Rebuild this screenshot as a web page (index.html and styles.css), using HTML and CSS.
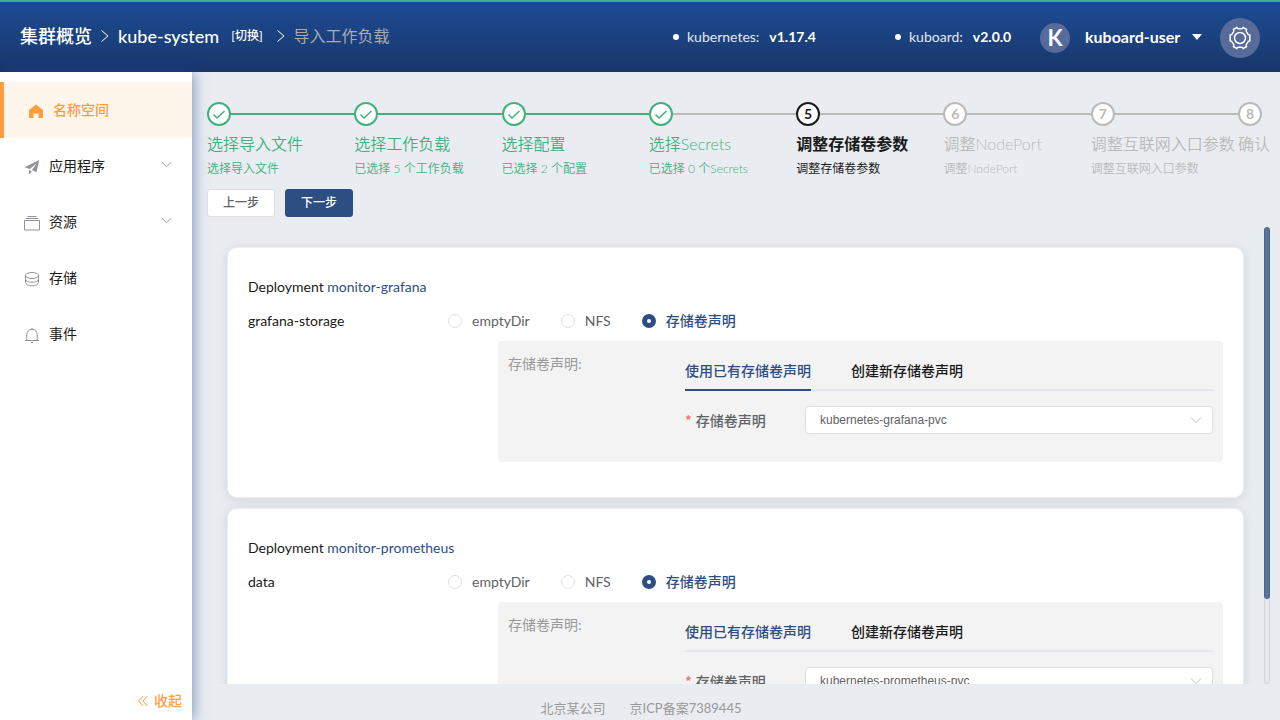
FILE: index.html
```html
<!DOCTYPE html>
<html lang="zh-CN">
<head>
<meta charset="utf-8">
<title>导入工作负载</title>
<link rel="stylesheet" href="styles.css">
</head>
<body>
<svg class="sprite" aria-hidden="true">
  <symbol id="down" viewBox="0 0 12 12"><path d="M1 3.500l5 5 5-5"/></symbol>
  <symbol id="right" viewBox="0 0 10 14"><path d="M1.500 1.500l6.500 5.500-6.500 5.500"/></symbol>
  <symbol id="check" viewBox="0 0 14 14"><path d="M1.500 7.500l3.500 3.500 7.500-7"/></symbol>
</svg>
<header class="header">
  <nav class="crumbs">
    <a class="crumb" href="#">集群概览</a>
    <svg class="crumb-arrow"><use href="#right"/></svg>
    <a class="crumb" href="#">kube-system</a>
    <a class="crumb-switch" href="#">[切换]</a>
    <svg class="crumb-arrow"><use href="#right"/></svg>
    <span class="crumb-current">导入工作负载</span>
  </nav>
  <div class="status">
    <div class="version version-wide"><i class="dot"></i>kubernetes: <b>v1.17.4</b></div>
    <div class="version"><i class="dot"></i>kuboard: <b>v2.0.0</b></div>
    <span class="avatar">K</span>
    <button class="user" type="button">kuboard-user <i class="caret"></i></button>
    <button class="gear" type="button" aria-label="设置">
      <svg viewBox="0 0 24 24"><path d="M8.800 1.500l1.200 1.200h4l1.200-1.200 3.300 1.900-.4 1.700 2 3.400 1.700.6v5.800l-1.700.6-2 3.400.4 1.700-3.300 1.900-1.200-1.200h-4l-1.200 1.200-3.300-1.900.4-1.700-2-3.400-1.700-.6V9.100l1.700-.6 2-3.400-.4-1.700z"/><circle cx="12" cy="12" r="5.500"/></svg>
    </button>
  </div>
</header>
<div class="layout">
  <aside class="sidebar">
    <nav class="menu">
      <a class="menu-item active" href="#"><svg class="menu-icon solid" viewBox="0 0 16 16"><path d="M8 1.500l7 5.500v8h-4.500v-4.500h-5V15H1V7z"/></svg>名称空间</a>
      <a class="menu-item" href="#"><svg class="menu-icon solid" viewBox="0 0 16 16"><path d="M15.200 1L12.500 13.300 8 11 12.500 4.500 5.800 10 .7 8.200zM5 11l3 1.500L5 15.500z"/></svg>应用程序<svg class="menu-arrow"><use href="#down"/></svg></a>
      <a class="menu-item" href="#"><svg class="menu-icon" viewBox="0 0 16 16"><path d="M.5 5.500h15v9.500H.5zM2 3.500h12M3.500 1.500h9"/></svg>资源<svg class="menu-arrow"><use href="#down"/></svg></a>
      <a class="menu-item" href="#"><svg class="menu-icon" viewBox="0 0 16 16"><ellipse cx="8" cy="4.500" rx="6.500" ry="3"/><path d="M1.500 4.500v7c0 1.800 2.800 3.300 6.500 3.300s6.500-1.500 6.500-3.300v-7M1.500 8c0 1.800 2.800 3.300 6.500 3.300s6.500-1.500 6.500-3.300"/></svg>存储</a>
      <a class="menu-item" href="#"><svg class="menu-icon" viewBox="0 0 16 16"><path d="M1 13.500h14M2.800 13.500V7.500a5.200 5.200 0 0 1 10.400 0v6M8 2.300V.8M7 15.500h2"/></svg>事件</a>
    </nav>
    <button class="collapse" type="button"><svg viewBox="0 0 12 12"><path d="M6 1L1.500 6 6 11M10.500 1L6 6l4.500 5"/></svg>收起</button>
  </aside>
  <div class="main">
    <ol class="steps">
      <li class="step done"><div class="step-head"><span class="step-icon"><svg><use href="#check"/></svg></span></div><div class="step-title">选择导入文件</div><div class="step-desc">选择导入文件</div></li>
      <li class="step done"><div class="step-head"><span class="step-icon"><svg><use href="#check"/></svg></span></div><div class="step-title">选择工作负载</div><div class="step-desc">已选择 5 个工作负载</div></li>
      <li class="step done"><div class="step-head"><span class="step-icon"><svg><use href="#check"/></svg></span></div><div class="step-title">选择配置</div><div class="step-desc">已选择 2 个配置</div></li>
      <li class="step done last-done"><div class="step-head"><span class="step-icon"><svg><use href="#check"/></svg></span></div><div class="step-title">选择Secrets</div><div class="step-desc">已选择 0 个Secrets</div></li>
      <li class="step current"><div class="step-head"><span class="step-icon">5</span></div><div class="step-title">调整存储卷参数</div><div class="step-desc">调整存储卷参数</div></li>
      <li class="step"><div class="step-head"><span class="step-icon">6</span></div><div class="step-title">调整NodePort</div><div class="step-desc">调整NodePort</div></li>
      <li class="step"><div class="step-head"><span class="step-icon">7</span></div><div class="step-title">调整互联网入口参数</div><div class="step-desc">调整互联网入口参数</div></li>
      <li class="step"><div class="step-head"><span class="step-icon">8</span></div><div class="step-title">确认</div></li>
    </ol>
    <div class="actions">
      <button class="btn" type="button">上一步</button>
      <button class="btn btn-primary" type="button">下一步</button>
    </div>
    <div class="scroll">
      <div class="scroll-view">
        <section class="card">
          <div class="card-title">Deployment <a href="#">monitor-grafana</a></div>
          <div class="volume">
            <div class="volume-name">grafana-storage</div>
            <div class="radios">
              <label class="radio"><input type="radio" name="v1">emptyDir</label>
              <label class="radio"><input type="radio" name="v1">NFS</label>
              <label class="radio"><input type="radio" name="v1" checked>存储卷声明</label>
            </div>
          </div>
          <div class="panel">
            <div class="panel-label">存储卷声明:</div>
            <div class="panel-body">
              <div class="tabs"><button class="tab selected underlined" type="button">使用已有存储卷声明</button><button class="tab" type="button">创建新存储卷声明</button></div>
              <div class="field">
                <label class="field-label" for="pvc1"><span class="required">*</span>存储卷声明</label>
                <div class="select"><select id="pvc1"><option>kubernetes-grafana-pvc</option></select><svg class="select-arrow"><use href="#down"/></svg></div>
              </div>
            </div>
          </div>
        </section>
        <section class="card">
          <div class="card-title">Deployment <a href="#">monitor-prometheus</a></div>
          <div class="volume">
            <div class="volume-name">data</div>
            <div class="radios">
              <label class="radio"><input type="radio" name="v2">emptyDir</label>
              <label class="radio"><input type="radio" name="v2">NFS</label>
              <label class="radio"><input type="radio" name="v2" checked>存储卷声明</label>
            </div>
          </div>
          <div class="panel">
            <div class="panel-label">存储卷声明:</div>
            <div class="panel-body">
              <div class="tabs"><button class="tab selected" type="button">使用已有存储卷声明</button><button class="tab" type="button">创建新存储卷声明</button></div>
              <div class="field">
                <label class="field-label" for="pvc2"><span class="required">*</span>存储卷声明</label>
                <div class="select"><select id="pvc2"><option>kubernetes-prometheus-pvc</option></select><svg class="select-arrow"><use href="#down"/></svg></div>
              </div>
            </div>
          </div>
        </section>
      </div>
      <div class="track"><div class="thumb" style="height:81.4%"></div></div>
    </div>
    <footer class="footer"><span>北京某公司</span><span>京ICP备案7389445</span></footer>
  </div>
</div>
</body>
</html>
```

FILE: styles.css
```css
* { box-sizing: border-box; }
body {
  margin: 0;
  height: 100vh;
  display: flex;
  flex-direction: column;
  overflow: hidden;
  background: #e9edf2;
  color: #1a1a1a;
  font: 14px/20px Lato, "Noto Sans CJK SC", sans-serif;
}
button, select { font: inherit; color: inherit; margin: 0; }
button { border: 0; background: none; padding: 0; cursor: pointer; }
a { color: inherit; text-decoration: none; }
svg { fill: none; stroke: currentColor; flex: none; }
.sprite { position: absolute; width: 0; height: 0; }

.header {
  flex: none;
  height: 72px;
  padding: 0 20px;
  display: flex;
  justify-content: space-between;
  align-items: center;
  border-top: 2px solid #42b07c;
  background: linear-gradient(#1d4b93, #18376b);
  color: #fff;
}
.crumbs { display: flex; align-items: center; padding-bottom: 2px; }
.crumb { font-size: 18px; font-weight: 500; }
.crumb-switch { font-size: 12px; font-weight: 500; margin-left: 12px; }
.crumb-arrow { width: 10px; height: 14px; margin: 0 8px; }
.crumb-switch + .crumb-arrow { margin-left: 13px; }
.crumb-current { font-size: 16px; color: #aaa; }
.status { display: flex; align-items: center; padding-top: 2px; }
.version { display: flex; align-items: center; min-width: 145px; padding-bottom: 2px; color: #e3e8f0; }
.version-wide { min-width: 222px; }
.version b { margin-left: 10px; color: #fff; }
.dot { width: 6px; height: 6px; margin-right: 8px; border-radius: 50%; background: #fff; }
.avatar {
  width: 30px;
  height: 30px;
  margin-right: 15px;
  border-radius: 50%;
  background: #566b99;
  font: 700 22px/30px Lato, sans-serif;
  text-align: center;
}
.user { display: flex; align-items: center; justify-content: space-between; min-width: 117px; padding-bottom: 2px; font-size: 16px; font-weight: 700; }
.caret { border: 5px solid transparent; border-top: 6px solid #fff; border-bottom: 0; }
.gear { display: grid; place-items: center; width: 40px; height: 40px; margin-left: 18px; border-radius: 50%; background: #566b99; }
.gear svg { width: 24px; height: 24px; stroke-width: 1.5; }

.layout { flex: 1; min-height: 0; display: flex; }
.sidebar {
  flex: none;
  width: 192px;
  display: flex;
  flex-direction: column;
  justify-content: space-between;
  padding-top: 10px;
  background: #fff;
  box-shadow: 2px 0 12px rgba(30, 70, 145, .5);
}
.menu-item { display: flex; align-items: center; height: 56px; padding: 0 20px 0 24px; }
.menu-item.active { padding-left: 24px; border-left: 4px solid #ff9f3b; background: #fff6eb; color: #ff9f3b; font-weight: 500; }
.menu-icon { width: 16px; height: 16px; margin: 2px 9px 0 0; color: #909399; }
.active .menu-icon { color: #ff9f3b; }
.solid { fill: currentColor; stroke: none; }
.menu-arrow { width: 11px; height: 11px; margin: 0 0 3px auto; color: #909399; }
.collapse { display: flex; align-items: center; justify-content: flex-end; height: 38px; padding-right: 10px; color: #ff9f3b; font-weight: 500; }
.collapse svg { width: 12px; height: 12px; margin-right: 5px; }

.main { flex: 1; min-width: 0; display: flex; flex-direction: column; padding: 30px 10px 0 15px; }
.steps { display: flex; margin: 0; padding: 0; list-style: none; color: #bababa; white-space: nowrap; }
.step { flex: 1 1 0; min-width: 0; }
.step:last-child { flex: none; }
.step-head { display: flex; align-items: center; height: 24px; }
.step-head::after { content: ""; flex: 1; height: 2px; background: #bababa; }
.step:last-child .step-head::after { display: none; }
.step-icon {
  display: grid;
  place-items: center;
  width: 24px;
  height: 24px;
  border: 2px solid;
  border-radius: 50%;
  background: #fff;
  font-weight: 700;
}
.step-icon svg { width: 14px; height: 14px; stroke-width: 1.5; }
.step-title { font-size: 16px; line-height: 36px; font-weight: 350; }
.step-desc { font-size: 12px; line-height: 14px; font-weight: 350; }
.done { color: #42b07c; }
.done .step-head::after { background: #42b07c; }
.last-done .step-head::after { background: #bababa; }
.current { color: #1a1a1a; }
.current .step-title { font-weight: 700; }
.current .step-desc { font-weight: 400; }

.actions { display: flex; gap: 10px; margin: 13px 0 10px; }
.btn { width: 68px; height: 28px; border: 1px solid #dcdfe6; border-radius: 3px; background: #fff; color: #606266; font-size: 12px; font-weight: 500; }
.btn-primary { border-color: #2d4e83; background: #2d4e83; color: #fff; }

.scroll { flex: 1; min-height: 0; display: flex; }
.scroll-view { flex: 1; min-width: 0; overflow: hidden; margin-left: -15px; padding: 20px 20px 0 35px; }
.track { width: 6px; border-radius: 3px; background: #e6e9ee; box-shadow: inset 0 0 1px 1px #cfd4dc; }
.thumb { border: 1px solid #48628e; border-radius: 3px; background: #5d739d; }

.card {
  margin-bottom: 10px;
  padding: 25px 20px 35px;
  border: 1px solid #ebeef5;
  border-radius: 10px;
  background: #fff;
  box-shadow: 0 2px 12px rgba(0, 0, 0, .1);
}
.card-title { line-height: 28px; }
.card-title a { color: #2d4e83; }
.volume { display: flex; height: 40px; align-items: center; }
.volume-name { width: 200px; }
.radios { display: flex; gap: 31px; color: #606266; }
.radio { display: flex; align-items: center; gap: 10px; }
.radio:has(input:checked) { color: #2d4e83; font-weight: 500; }
.radio input { appearance: none; width: 14px; height: 14px; margin: 0; border: 1px solid #dcdfe6; border-radius: 50%; background: #fff; }
.radio input:checked { border: 5px solid #2d4e83; }
.panel { display: flex; margin-left: 250px; padding: 10px 10px 28px; border-radius: 4px; background: #f3f3f3; }
.panel-label { width: 177px; line-height: 26px; color: #999; }
.panel-body { flex: 1; min-width: 0; }
.tabs { display: flex; gap: 40px; height: 40px; border-bottom: 2px solid #e4e7ed; }
.tab { height: 40px; padding-top: 2px; font-weight: 500; border-bottom: 2px solid transparent; }
.selected { color: #2d4e83; }
.underlined { border-color: #2d4e83; }
.field { display: flex; align-items: center; margin-top: 15px; }
.field-label { width: 120px; font-weight: 500; color: #606266; }
.required { margin-right: 4px; color: #f56c6c; font-family: "Noto Sans CJK SC", sans-serif; }
.select { flex: 1; display: flex; position: relative; }
.select select {
  appearance: none;
  width: 100%;
  height: 28px;
  padding: 0 14px;
  border: 1px solid #dcdfe6;
  border-radius: 4px;
  background: #fff;
  color: #606266;
  font: 12px "Liberation Sans", Arial, sans-serif;
}
.select-arrow { position: absolute; top: 8px; right: 11px; width: 12px; height: 12px; color: #c0c4cc; pointer-events: none; }
.footer { flex: none; display: flex; gap: 24px; justify-content: center; height: 36px; padding: 14px 195px 0 0; font-size: 13px; color: #999; }
</style>
```
